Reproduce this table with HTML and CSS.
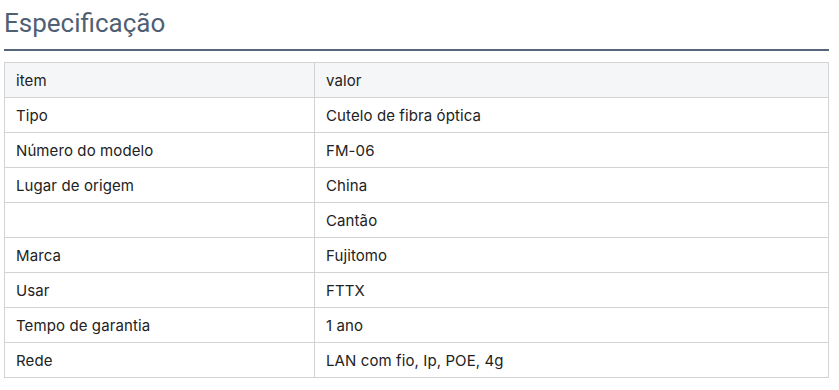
FILE: index.html
```html
<!DOCTYPE html>
<html lang="pt">
<head>
<meta charset="utf-8">
<link rel="stylesheet" href="styles.css">
</head>
<body>
<section class="spec">
  <h2 class="spec-title">Especificação</h2>
  <table class="spec-table">
    <colgroup><col class="col-item"><col class="col-value"></colgroup>
    <thead>
      <tr><th>item</th><th>valor</th></tr>
    </thead>
    <tbody>
      <tr><td>Tipo</td><td>Cutelo de fibra óptica</td></tr>
      <tr><td>Número do modelo</td><td>FM-06</td></tr>
      <tr><td>Lugar de origem</td><td>China</td></tr>
      <tr><td></td><td>Cantão</td></tr>
      <tr><td>Marca</td><td>Fujitomo</td></tr>
      <tr><td>Usar</td><td>FTTX</td></tr>
      <tr><td>Tempo de garantia</td><td>1 ano</td></tr>
      <tr><td>Rede</td><td>LAN com fio, Ip, POE, 4g</td></tr>
    </tbody>
  </table>
</section>
</body>
</html>
```

FILE: styles.css
```css
html, body {
  margin: 0;
  padding: 0;
  background: #ffffff;
}

.spec {
  padding: 0 10px 0 4px;
  width: 825px;
}

.spec-title {
  margin: 0;
  font-family: Roboto, "Liberation Sans", sans-serif;
  font-weight: 400;
  font-size: 26px;
  line-height: 34px;
  padding-top: 6px;
  padding-bottom: 9px;
  color: #4f6072;
  border-bottom: 2px solid #56657a;
}

.spec-table {
  margin-top: 11px;
  width: 825px;
  border-collapse: collapse;
  table-layout: fixed;
  font-family: Inter, "Liberation Sans", sans-serif;
  font-size: 15px;
  letter-spacing: 0.1px;
  color: #222222;
}

.col-item { width: 310px; }

.spec-table th,
.spec-table td {
  border: 1px solid #d3d3d3;
  padding: 9px 11px 7px;
  line-height: 18px;
  height: 18px;
  text-align: left;
  font-weight: 400;
}

.spec-table thead th {
  background: #f5f6f8;
}
```
